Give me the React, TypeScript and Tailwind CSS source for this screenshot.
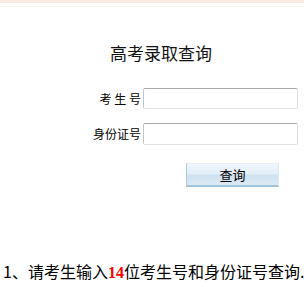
import React from "react";

export default function App() {
  const cjk = { fontFamily: '"SimSun","Noto Sans CJK SC","Liberation Sans",sans-serif' };
  return (
    <div className="w-[304px] h-[287px] bg-white overflow-hidden relative" style={cjk}>
      <div className="h-[3px] bg-[#fde9e1]" />
      <div className="h-[3px] bg-white" />
      <div className="h-px bg-[#fcf2ee]" />
      <div className="mt-[34px] flex h-[24px] items-center pl-[110px] text-[17px] leading-[24px] text-[#111]">
        高考录取查询
      </div>
      <div className="mt-[23px] flex items-center">
        <div className="w-[142px] text-right text-[12px] leading-[21px] text-black pr-[1px]">考 生 号</div>
        <input className="h-[21px] w-[155px] ml-[1px] rounded-[2px] border border-t-[#a9a9a9] border-l-[#c4c4c4] border-r-[#dedede] border-b-[#e3e3e3] bg-white outline-none" />
      </div>
      <div className="mt-[14px] flex items-center">
        <div className="w-[142px] text-right text-[12px] leading-[22px] text-black pr-[1px]">身份证号</div>
        <input className="h-[22px] w-[155px] ml-[1px] rounded-[2px] border border-t-[#a9a9a9] border-l-[#c4c4c4] border-r-[#dedede] border-b-[#e3e3e3] bg-white outline-none" />
      </div>
      <div className="mt-[18px] pl-[186px]">
        <button className="block h-[24px] w-[93px] border-l border-t border-l-[#a8cde3] border-t-[#e4eef6] border-r border-r-[#d8e7f2] border-b-[2px] border-b-[#9fc4dd] bg-[linear-gradient(#f0f6fb,#e2eef8_45%,#cfe2f1_55%,#dbe9f4)] text-[13px] leading-[20px] text-black">
          查询
        </button>
      </div>
      <div className="mt-[73px] pl-[3px] whitespace-nowrap text-[16px] leading-[22px] text-black">
        1、请考生输入<span className="font-bold text-[#ff0000]" style={{ fontFamily: '"Liberation Serif",serif' }}>14</span>位考生号和身份证号查询.
      </div>
    </div>
  );
}
